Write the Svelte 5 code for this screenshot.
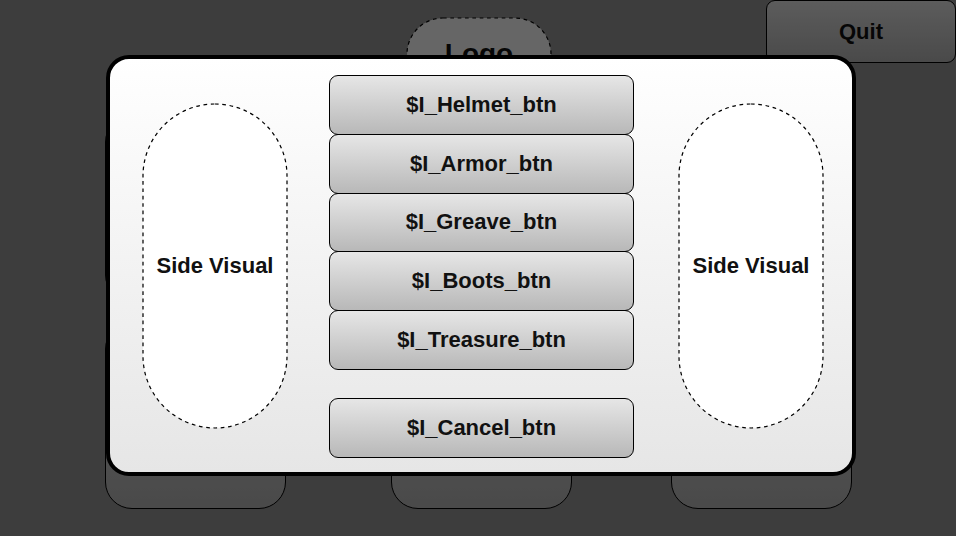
<script>
  const slots = ['Helmet', 'Armor', 'Greave', 'Boots', 'Treasure'];
  const cards = [1, 2, 3, 4, 5, 6];
</script>

{#snippet sideVisual()}
  <div class="visual side">
    <svg width="146" height="326" viewBox="0 0 146 326" aria-hidden="true">
      <rect x="1" y="1" width="144" height="324" rx="72" />
    </svg>
    <span>Side Visual</span>
  </div>
{/snippet}

<div class="screen">
  <header>
    <div class="visual logo">
      <svg width="146" height="74" viewBox="0 0 146 74" aria-hidden="true">
        <rect x="1" y="1" width="144" height="72" rx="36" />
      </svg>
      <span>Logo</span>
    </div>
    <button class="btn quit">Quit</button>
  </header>
  <main>
    {#each cards as card (card)}
      <div class="card"></div>
    {/each}
  </main>
</div>

<div class="overlay">
  <div class="dialog" role="dialog" aria-modal="true" aria-label="Equipment">
    {@render sideVisual()}
    <div class="menu">
      <div class="slots">
        {#each slots as slot (slot)}
          <button class="btn">$I_{slot}_btn</button>
        {/each}
      </div>
      <button class="btn cancel">$I_Cancel_btn</button>
    </div>
    {@render sideVisual()}
  </div>
</div>

<style>
  :global(body) {
    background: #999;
  }

  .screen,
  .overlay {
    box-sizing: border-box;
    min-height: 100vh;
    font: bold 22px/26px 'Liberation Sans', Arial, sans-serif;
    color: #111;
  }

  header {
    display: grid;
    grid-template-columns: 1fr 146px 1fr;
    align-items: start;
    height: 115px;
    padding-left: 2px;
  }

  .visual {
    display: grid;
    place-items: center;
  }

  .visual > * {
    grid-area: 1 / 1;
  }

  .visual svg {
    display: block;
  }

  .visual rect {
    fill: #fff;
    stroke: #000;
    stroke-width: 1.22;
    stroke-dasharray: 3.67 3.67;
  }

  .logo {
    grid-column: 2;
    margin-top: 17px;
    font-size: 28px;
    line-height: 32px;
  }

  .btn {
    box-sizing: border-box;
    margin: 0;
    padding: 0;
    border: 1px solid #000;
    border-radius: 9px;
    background: linear-gradient(#e6e6e6, #b8b8b8);
    color: inherit;
    font: inherit;
    cursor: pointer;
  }

  .quit {
    grid-column: 3;
    justify-self: end;
    width: 190px;
    height: 63px;
  }

  main {
    display: grid;
    grid-template-columns: 286fr 280fr 181fr;
    row-gap: 20px;
    padding: 0 104px 0 105px;
  }

  .card {
    box-sizing: border-box;
    width: 181px;
    height: 187px;
    border: 1px solid #000;
    border-radius: 27px;
    background: linear-gradient(#e6e6e6, #b8b8b8);
  }

  .overlay {
    position: absolute;
    inset: 0;
    padding: 55px 100px 60px 106px;
    background: rgba(0, 0, 0, 0.6);
  }

  .dialog {
    box-sizing: border-box;
    display: grid;
    grid-template-columns: 146px 1fr 146px;
    align-items: start;
    padding: 16px 28px 14px 32px;
    border: 4px solid #000;
    border-radius: 23px;
    background: linear-gradient(#fff, #e6e6e6);
  }

  .side {
    margin-top: 28px;
  }

  .menu {
    display: grid;
    row-gap: 28px;
    padding: 0 44px 0 41px;
  }

  .slots {
    display: flex;
    flex-direction: column;
    height: 295px;
  }

  .slots .btn {
    flex: 1;
  }

  .slots .btn + .btn {
    margin-top: -1px;
  }

  .cancel {
    height: 60px;
  }
</style>
